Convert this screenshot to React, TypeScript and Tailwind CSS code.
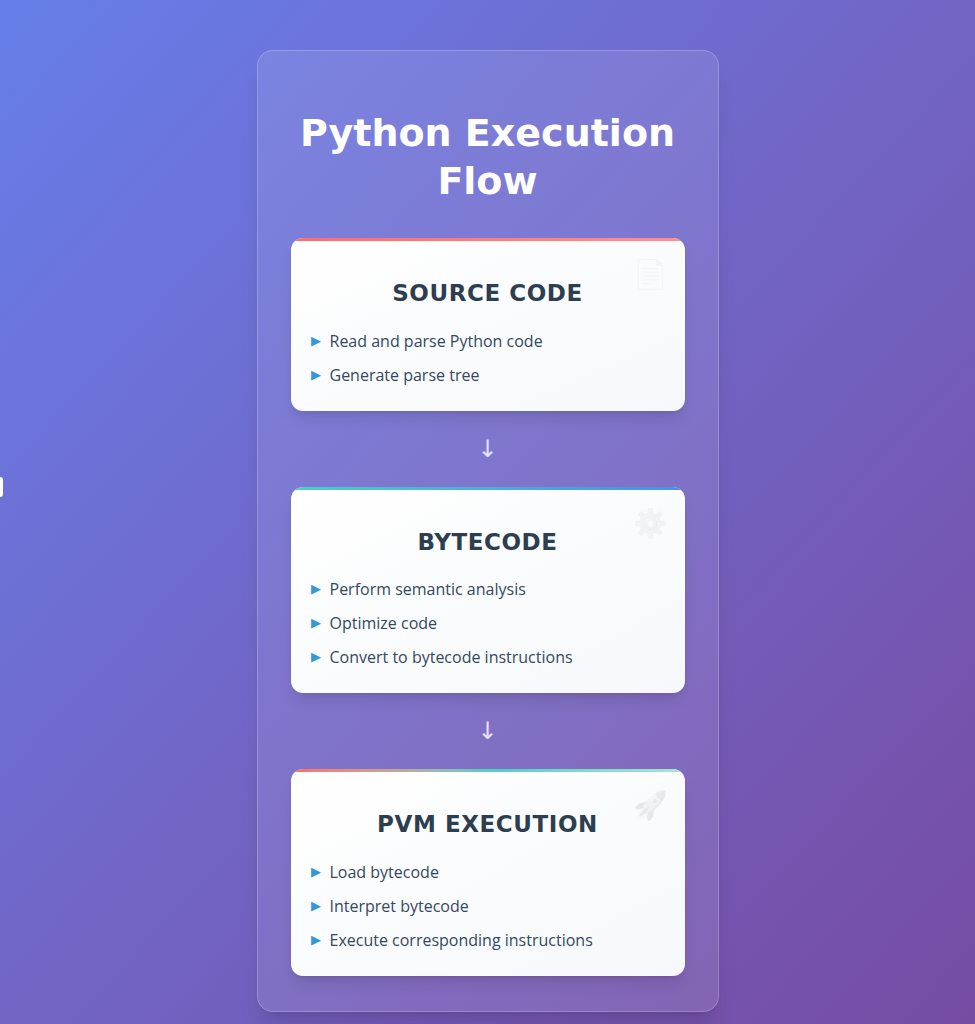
import React from 'react';

const stages = [
  {
    title: 'SOURCE CODE',
    icon: '📄',
    bar: 'bg-gradient-to-r from-[#ff6b6b] to-[#ff8e8e]',
    items: ['Read and parse Python code', 'Generate parse tree'],
  },
  {
    title: 'BYTECODE',
    icon: '⚙',
    bar: 'bg-gradient-to-r from-[#4ecdc4] to-[#4a90e2]',
    items: ['Perform semantic analysis', 'Optimize code', 'Convert to bytecode instructions'],
  },
  {
    title: 'PVM EXECUTION',
    icon: '🚀',
    bar: 'bg-gradient-to-r from-[#ff6b6b] via-[#4ecdc4] to-[#a8e6cf]',
    items: ['Load bytecode', 'Interpret bytecode', 'Execute corresponding instructions'],
  },
];

export default function App() {
  return (
    <div className="relative min-h-[1024px] bg-gradient-to-br from-[#667eea] to-[#764ba2] flex justify-center pt-[50px] pb-8">
      <div className="absolute left-0 top-[477px] w-[3px] h-[20px] bg-white rounded-r-sm" />
      <div className="w-[462px] rounded-2xl bg-white/10 border border-white/20 shadow-xl px-[33px] pt-[58px] pb-[35px]">
        <h1
          className="text-center text-white text-[38px] leading-[48px] font-bold mb-[33px]"
          style={{ fontFamily: "'DejaVu Sans', sans-serif" }}
        >
          Python Execution
          <br />
          Flow
        </h1>

        {stages.map((s, i) => (
          <React.Fragment key={s.title}>
            {i > 0 && (
              <div className="h-[76px] flex items-center justify-center text-white/80 text-[24px]" style={{ fontFamily: "'DejaVu Sans', sans-serif" }}>
                ↓
              </div>
            )}
            <div className="relative overflow-hidden rounded-xl bg-gradient-to-br from-white to-[#f6f8fb] shadow-lg pt-[38px] pb-[19px] px-[20px]">
              <div className={`absolute top-0 left-0 right-0 h-[3px] ${s.bar}`} />
              <div className="absolute top-[14px] right-[16px] text-[28px] opacity-10 grayscale">{s.icon}</div>
              <h2
                className="text-center text-[#2c3e50] text-[23px] font-bold tracking-wide mb-[13px]"
                style={{ fontFamily: "'DejaVu Sans', sans-serif" }}
              >
                {s.title}
              </h2>
              <ul className="flex flex-col" style={{ fontFamily: "'Open Sans', sans-serif" }}>
                {s.items.map((it) => (
                  <li key={it} className="flex items-center gap-[9px] h-[34px] text-[16px] text-[#34495e]">
                    <span className="text-[#3498db] text-[13px]">▶</span>
                    {it}
                  </li>
                ))}
              </ul>
            </div>
          </React.Fragment>
        ))}
      </div>
    </div>
  );
}
